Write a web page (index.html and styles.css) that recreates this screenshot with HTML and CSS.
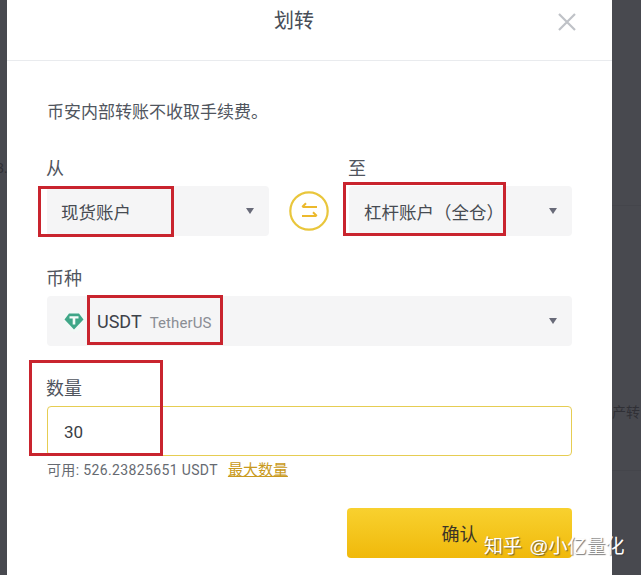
FILE: index.html
```html
<!DOCTYPE html>
<html lang="zh-CN">
<head>
    <meta charset="UTF-8"/>
    <title>划转</title>
    <link rel="stylesheet" href="styles.css">
</head>
<body>
    <div class="page">
        <div class="backdrop backdrop-left"><span class="ghost ghost-left">3.</span></div>
        <div class="modal">
            <div class="modal-header">
                <h2>划转</h2>
                <svg class="close-icon" width="20" height="20" viewBox="0 0 20 20">
                    <path d="M2 2L18 18M18 2L2 18" stroke="#bfc2c7" stroke-width="2.2" fill="none"/>
                </svg>
            </div>
            <div class="modal-body">
                <p class="note">币安内部转账不收取手续费。</p>
                <div class="transfer-row">
                    <div class="field">
                        <label class="field-label">从</label>
                        <div class="select-box select-from">
                            <span>现货账户</span>
                            <span class="caret"></span>
                        </div>
                    </div>
                    <div class="swap-icon">
                        <svg width="40" height="40" viewBox="0 0 40 40">
                            <circle cx="20" cy="20" r="18.7" stroke="#e9c63c" stroke-width="2.2" fill="#fff"/>
                            <path d="M28 16H13.5M17 12.2L13.2 16M13 25H27.5M24 21.2L27.8 25" stroke="#ecb92c" stroke-width="2" fill="none"/>
                        </svg>
                    </div>
                    <div class="field">
                        <label class="field-label">至</label>
                        <div class="select-box">
                            <span>杠杆账户（全仓）</span>
                            <span class="caret"></span>
                        </div>
                    </div>
                </div>
                <div class="field coin-field">
                    <label class="field-label">币种</label>
                    <div class="select-box coin-box">
                        <div class="coin">
                            <svg class="coin-icon" width="22" height="22" viewBox="0 0 22 22">
                                <circle cx="11" cy="11" r="11" fill="#f3f8f6"/>
                                <path d="M6 3.5H16L20.5 9.5L11 19.5L1.5 9.5Z" fill="#3fa687"/>
                                <path d="M6.5 6.2H15.5V8.4H12.3V14.5H9.7V8.4H6.5Z" fill="#f4fbf8"/>
                            </svg>
                            <span class="coin-name">USDT</span>
                            <span class="coin-full">TetherUS</span>
                        </div>
                        <span class="caret"></span>
                    </div>
                </div>
                <div class="field amount-field">
                    <label class="field-label">数量</label>
                    <div class="amount-box">30</div>
                </div>
                <div class="balance">
                    <span>可用: 526.23825651 USDT</span>
                    <a class="max-link" href="#">最大数量</a>
                </div>
                <div class="actions">
                    <button class="confirm-btn">确认</button>
                </div>
            </div>
        </div>
        <div class="backdrop backdrop-right">
            <span class="ghost ghost-right">产转</span>
            <span class="ghost-line ghost-line-top"></span>
            <span class="ghost-line ghost-line-bottom"></span>
        </div>

        <!-- red marks and watermark sit on top of the screenshot -->
        <div class="mark mark-from"></div>
        <div class="mark mark-to"></div>
        <div class="mark mark-coin"></div>
        <div class="mark mark-amount"></div>
        <div class="watermark">知乎 @小亿量化</div>
    </div>
</body>
</html>
```

FILE: styles.css
```css
* {
    margin: 0;
    padding: 0;
    box-sizing: border-box;
}
html, body {
    width: 100%;
    height: 100%;
    overflow: hidden;
    background-color: #48494f;
}
.page {
    position: relative;
    display: flex;
    width: 641px;
    height: 575px;
    overflow: hidden;
    font-family: "Liberation Sans", "Noto Sans CJK SC", sans-serif;
    color: #3a3f47;
}
.backdrop {
    position: relative;
    background-color: #48494f;
    overflow: hidden;
}
.backdrop-left {
    width: 7px;
}
.backdrop-right {
    width: 29px;
}
.ghost {
    position: absolute;
    font-size: 14px;
    line-height: 16px;
    color: #303036;
    white-space: nowrap;
}
.ghost-left {
    top: 160px;
    left: -4px;
}
.ghost-right {
    top: 404px;
    left: 0;
}
.ghost-line {
    position: absolute;
    left: 0;
    width: 100%;
    height: 1px;
    background-color: #44454b;
}
.ghost-line-top {
    top: 205px;
}
.ghost-line-bottom {
    top: 470px;
}
.modal {
    width: 605px;
    height: 575px;
    background-color: #ffffff;
}
.modal-header {
    display: flex;
    align-items: center;
    justify-content: space-between;
    height: 61px;
    padding: 0 35px 19px 267px;
    border-bottom: 1px solid #e9ebee;
}
.modal-header h2 {
    font-size: 20px;
    font-weight: normal;
    line-height: 42px;
    color: #474d57;
}
.close-icon {
    display: block;
    margin-top: 2px;
}
.modal-body {
    padding: 39px 40px 0;
}
.note {
    font-size: 17px;
    line-height: 26px;
    color: #50555e;
}
.transfer-row {
    display: grid;
    grid-template-columns: 222px 40px 223px;
    gap: 20px;
    align-items: end;
    margin-top: 30px;
}
.field-label {
    display: block;
    margin-left: -1px;
    font-size: 18px;
    line-height: 26px;
    height: 30px;
    color: #50555e;
}
.select-box {
    display: flex;
    align-items: center;
    justify-content: space-between;
    height: 50px;
    padding: 0 15px;
    font-size: 17.5px;
    color: #474b52;
    background-color: #f5f5f6;
    border-radius: 4px;
}
.select-from {
    padding-left: 14px;
}
.caret {
    width: 0;
    height: 0;
    border-left: 4.5px solid transparent;
    border-right: 4.5px solid transparent;
    border-top: 6px solid #686a78;
}
.swap-icon {
    height: 40px;
    margin-bottom: 5px;
}
.swap-icon svg {
    display: block;
}
.coin-field {
    margin-top: 30px;
}
.coin {
    display: flex;
    align-items: center;
}
.coin-icon {
    display: block;
    margin-left: 1px;
}
.coin-name {
    margin-left: 12px;
    font-family: Roboto, sans-serif;
    font-size: 18px;
    color: #3d4149;
}
.coin-full {
    margin-left: 8px;
    margin-top: 3px;
    font-family: Roboto, sans-serif;
    font-size: 15px;
    letter-spacing: 0.1px;
    color: #8a8d94;
}
.amount-field {
    margin-top: 30px;
}
.amount-box {
    height: 50px;
    padding: 0 16px;
    font-family: Roboto, sans-serif;
    font-size: 17px;
    line-height: 50px;
    color: #3a3e45;
    background-color: #ffffff;
    border: 1px solid #e6cd52;
    border-radius: 4px;
}
.balance {
    display: flex;
    gap: 10px;
    margin-top: 5px;
    font-family: Roboto, "Noto Sans CJK SC", sans-serif;
    font-size: 14px;
    letter-spacing: 0.36px;
    line-height: 18px;
    color: #666a71;
}
.max-link {
    font-size: 15px;
    letter-spacing: 0;
    color: #c99a20;
}
.actions {
    display: flex;
    justify-content: flex-end;
    margin-top: 29px;
}
.confirm-btn {
    width: 225px;
    height: 50px;
    font-family: inherit;
    font-size: 18px;
    color: #3b3526;
    background: linear-gradient(to bottom, #f8d12f, #f0b90b);
    border: none;
    border-radius: 4px;
}
.mark {
    position: absolute;
    border: 3px solid #c9242e;
}
.mark-from {
    left: 38px;
    top: 186px;
    width: 136px;
    height: 51px;
}
.mark-to {
    left: 343px;
    top: 182px;
    width: 163px;
    height: 54px;
}
.mark-coin {
    left: 87px;
    top: 295px;
    width: 136px;
    height: 50px;
}
.mark-amount {
    left: 29px;
    top: 360px;
    width: 134px;
    height: 96px;
}
.watermark {
    position: absolute;
    left: 484px;
    top: 535px;
    font-size: 19px;
    word-spacing: 2px;
    line-height: 24px;
    color: #ffffff;
    white-space: nowrap;
    text-shadow: 1px 1px 1px rgba(60, 60, 60, 0.7);
}
```
